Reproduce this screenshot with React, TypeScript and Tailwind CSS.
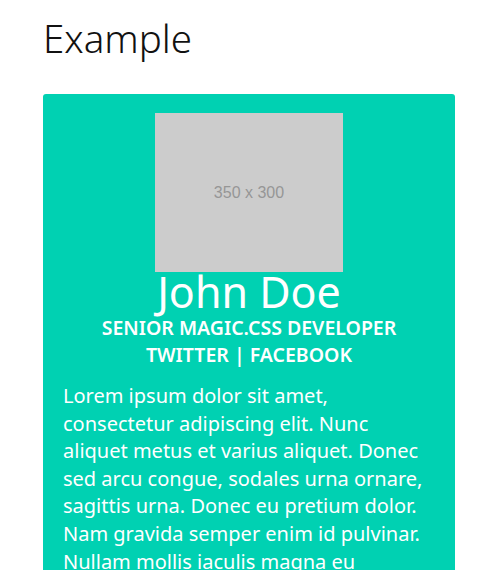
export default function App() {
  return (
    <div className="min-h-[570px] bg-white px-[43px] pt-[14px]" style={{ fontFamily: '"Noto Sans", "Open Sans", sans-serif' }}>
      <h1 className="text-[38.5px] font-light leading-[48px] text-[#111]">Example</h1>

      <div className="mt-[32px] w-[412px] rounded-[3px] bg-[#00d1b2] px-5 pt-[19px] pb-6 text-white">
        {/* placeholder image */}
        <div className="mx-auto flex h-[159px] w-[188px] items-center justify-center bg-[#cccccc]">
          <span className="text-[16px] text-[#969696]" style={{ fontFamily: '"Liberation Sans", Arial, sans-serif' }}>
            350 x 300
          </span>
        </div>

        <div className="text-center">
          <h2 className="text-[43px] leading-[39px]">John Doe</h2>
          <p className="mt-[3px] text-[19.5px] font-semibold uppercase leading-[27px]">Senior Magic.css Developer</p>
          <p className="text-[19.5px] font-semibold uppercase leading-[27px]">
            <a href="#">Twitter</a> | <a href="#">Facebook</a>
          </p>
        </div>

        <p className="mt-[14px] pr-[6px] text-[20px] leading-[27.6px]">
          Lorem ipsum dolor sit amet, consectetur adipiscing elit. Nunc aliquet metus et varius aliquet. Donec sed
          arcu congue, sodales urna ornare, sagittis urna. Donec eu pretium dolor. Nam gravida semper enim id
          pulvinar. Nullam mollis iaculis magna eu tempor. Sed a lacus vel nisi varius tincidunt.
        </p>
      </div>
    </div>
  )
}
